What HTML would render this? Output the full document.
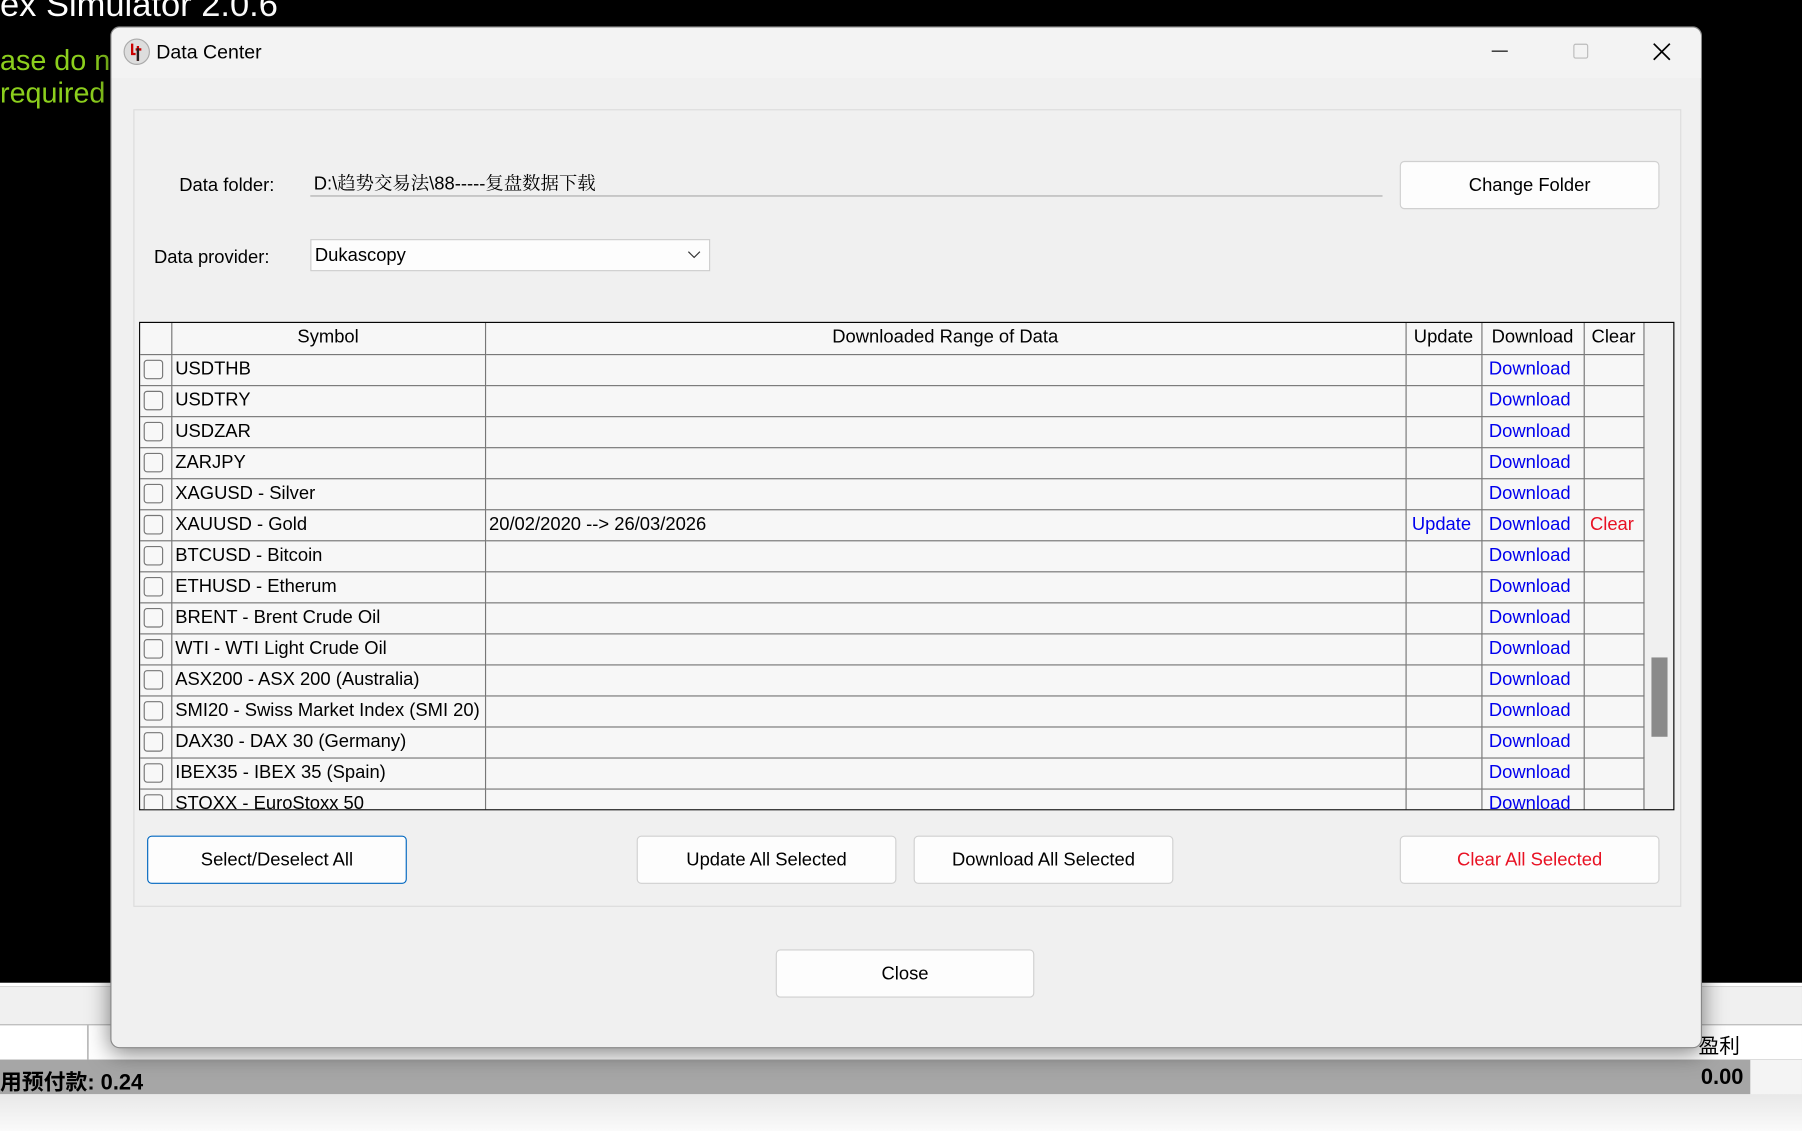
<!DOCTYPE html>
<html><head><meta charset="utf-8"><style>
*{margin:0;padding:0;box-sizing:border-box}
body{width:1802px;height:1131px;overflow:hidden;background:#000;font-family:"Liberation Sans","Noto Sans CJK SC",sans-serif}
#s{position:absolute;left:0;top:0;width:1568px;height:984px;transform:scale(1.14923,1.14939);transform-origin:0 0;background:#000;overflow:hidden}
.a{position:absolute}
.btn{position:absolute;background:#fdfdfd;border:1px solid #d0d0d0;border-radius:4px;font-size:16px;text-align:center;color:#000}
table{border-collapse:collapse;table-layout:fixed}
td{border:1px solid #777;height:27px;font-size:16px;padding:1px 0 0 3px;white-space:nowrap;overflow:hidden;background:#f7f7f7;color:#000}
.cb{display:inline-block;width:17px;height:17px;border:1px solid #777;border-radius:3px;background:#f8f8f8;vertical-align:middle}
.dl{color:#0000ee;padding-left:6px}
.c{text-align:center;padding:0}
</style></head><body><div id="s">
<div class="a" style="left:0;top:-12px;color:#fff;font-size:30px">ex Simulator 2.0.6</div>
<div class="a" style="left:0;top:39px;color:#8ccf1d;font-size:25px;line-height:28px">ase do no<br>required</div>
<div class="a" style="left:0;top:855px;width:1568px;height:3px;background:#fff"></div>
<div class="a" style="left:0;top:858px;width:1568px;height:34px;background:#f0f0f0;border-bottom:1px solid #bbb"></div>
<div class="a" style="left:0;top:892px;width:1568px;height:30px;background:#fff"></div>
<div class="a" style="left:76px;top:892px;width:1px;height:30px;background:#999"></div>
<div class="a" style="left:1478px;top:896px;font-size:18px">盈利</div>
<div class="a" style="left:0;top:922px;width:1568px;height:62px;background:#f4f4f4"></div>
<div class="a" style="left:0;top:922px;width:1523px;height:30px;background:#a6a6a6"></div>
<div class="a" style="left:0;top:927px;font-size:19px;font-weight:bold">用预付款: 0.24</div>
<div class="a" style="left:1480px;top:927px;font-size:19px;font-weight:bold">0.00</div>
<div class="a" style="left:0;top:952px;width:1568px;height:32px;background:linear-gradient(#e8e8e8,#fafafa)"></div>
<div class="a" style="left:96px;top:23px;width:1385px;height:889px;background:#f0f0f0;border-radius:8px;box-shadow:0 4px 20px rgba(0,0,0,.5);border:1px solid #888"></div>
<div class="a" style="left:97px;top:24px;width:1383px;height:44px;background:#f3f3f3;border-radius:8px 8px 0 0"></div>
<svg class="a" style="left:107px;top:33px" width="24" height="24"><circle cx="12" cy="12" r="11" fill="#ddd" stroke="#aaa"/><path d="M8 5v9h3M13 7v13M11 10h5" stroke="#c00" stroke-width="2" fill="none"/><path d="M13 9v11" stroke="#222" stroke-width="2"/></svg>
<div class="a" style="left:136px;top:36px;font-size:17px">Data Center</div>
<div class="a" style="left:1298px;top:44px;width:14px;height:1px;background:#000"></div>
<div class="a" style="left:1369px;top:38px;width:13px;height:13px;border:1px solid #bbb;border-radius:2px"></div>
<svg class="a" style="left:1438px;top:37px" width="16" height="16"><path d="M1 1L15 15M15 1L1 15" stroke="#000" stroke-width="1.5"/></svg>
<div class="a" style="left:116px;top:95px;width:1347px;height:694px;border:1px solid #dcdcdc"></div>
<div class="a" style="left:156px;top:153px;font-size:16px">Data folder:</div>
<div class="a" style="left:270px;top:146px;width:933px;height:25px;border-bottom:1px solid #aaa;background:#f0f0f0;font-size:16px;padding:1px 3px;font-family:'Liberation Sans','Noto Serif CJK SC',serif">D:\趋势交易法\88-----复盘数据下载</div>
<div class="btn" style="left:1218px;top:140px;width:226px;height:42px;line-height:42px">Change Folder</div>
<div class="a" style="left:134px;top:216px;font-size:16px">Data provider:</div>
<div class="a" style="left:270px;top:208px;width:348px;height:28px;border:1px solid #ccc;background:#fdfdfd;font-size:16px;padding:5px 3px">Dukascopy</div>
<svg class="a" style="left:598px;top:216px" width="12" height="10"><path d="M1 3l5 5 5-5" stroke="#333" fill="none"/></svg>
<div class="a" style="left:121px;top:280px;width:1336px;height:425px;border:1px solid #000;background:#f0f0f0;overflow:hidden">
<table style="width:1308px">
<colgroup><col style="width:27px"><col style="width:273px"><col style="width:801px"><col style="width:66px"><col style="width:89px"><col style="width:52px"></colgroup>
<tr><td style="border-left:0;border-top:0"></td><td class="c" style="border-top:0">Symbol</td><td class="c" style="border-top:0">Downloaded Range of Data</td><td class="c" style="border-top:0">Update</td><td class="c" style="border-top:0">Download</td><td class="c" style="border-top:0">Clear</td></tr>
<tr><td style="border-left:0"><span class="cb"></span></td><td>USDTHB</td><td></td><td></td><td class="dl">Download</td><td></td></tr>
<tr><td style="border-left:0"><span class="cb"></span></td><td>USDTRY</td><td></td><td></td><td class="dl">Download</td><td></td></tr>
<tr><td style="border-left:0"><span class="cb"></span></td><td>USDZAR</td><td></td><td></td><td class="dl">Download</td><td></td></tr>
<tr><td style="border-left:0"><span class="cb"></span></td><td>ZARJPY</td><td></td><td></td><td class="dl">Download</td><td></td></tr>
<tr><td style="border-left:0"><span class="cb"></span></td><td>XAGUSD - Silver</td><td></td><td></td><td class="dl">Download</td><td></td></tr>
<tr><td style="border-left:0"><span class="cb"></span></td><td>XAUUSD - Gold</td><td>20/02/2020 --&gt; 26/03/2026</td><td class="dl" style="padding-left:5px">Update</td><td class="dl">Download</td><td style="color:#e81123;padding-left:5px">Clear</td></tr>
<tr><td style="border-left:0"><span class="cb"></span></td><td>BTCUSD - Bitcoin</td><td></td><td></td><td class="dl">Download</td><td></td></tr>
<tr><td style="border-left:0"><span class="cb"></span></td><td>ETHUSD - Etherum</td><td></td><td></td><td class="dl">Download</td><td></td></tr>
<tr><td style="border-left:0"><span class="cb"></span></td><td>BRENT - Brent Crude Oil</td><td></td><td></td><td class="dl">Download</td><td></td></tr>
<tr><td style="border-left:0"><span class="cb"></span></td><td>WTI - WTI Light Crude Oil</td><td></td><td></td><td class="dl">Download</td><td></td></tr>
<tr><td style="border-left:0"><span class="cb"></span></td><td>ASX200 - ASX 200 (Australia)</td><td></td><td></td><td class="dl">Download</td><td></td></tr>
<tr><td style="border-left:0"><span class="cb"></span></td><td>SMI20 - Swiss Market Index (SMI 20)</td><td></td><td></td><td class="dl">Download</td><td></td></tr>
<tr><td style="border-left:0"><span class="cb"></span></td><td>DAX30 - DAX 30 (Germany)</td><td></td><td></td><td class="dl">Download</td><td></td></tr>
<tr><td style="border-left:0"><span class="cb"></span></td><td>IBEX35 - IBEX 35 (Spain)</td><td></td><td></td><td class="dl">Download</td><td></td></tr>
<tr><td style="border-left:0"><span class="cb"></span></td><td>STOXX - EuroStoxx 50</td><td></td><td></td><td class="dl">Download</td><td></td></tr>
</table>
<div class="a" style="left:1315px;top:291px;width:14px;height:69px;background:#8a8a8a"></div>
</div>
<div class="btn" style="left:128px;top:727px;width:226px;height:42px;line-height:42px;border:1px solid #0067c0">Select/Deselect All</div>
<div class="btn" style="left:554px;top:727px;width:226px;height:42px;line-height:42px">Update All Selected</div>
<div class="btn" style="left:795px;top:727px;width:226px;height:42px;line-height:42px">Download All Selected</div>
<div class="btn" style="left:1218px;top:727px;width:226px;height:42px;line-height:42px;color:#e81123">Clear All Selected</div>
<div class="btn" style="left:675px;top:826px;width:225px;height:42px;line-height:42px">Close</div>
</div></body></html>
